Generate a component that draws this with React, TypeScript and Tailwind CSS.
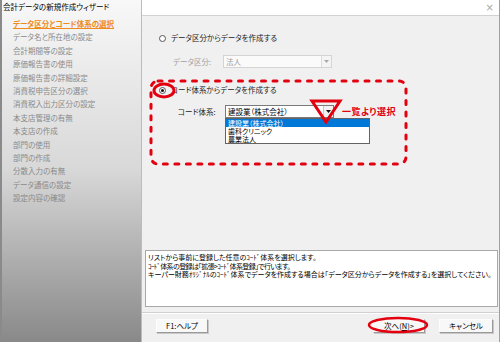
const FONT = "[font-family:'Noto_Sans_CJK_JP','Noto_Sans',sans-serif] [font-feature-settings:'palt']"

const steps = [
  'データ区分とコード体系の選択',
  'データ名と所在地の設定',
  '会計期間等の設定',
  '原価報告書の使用',
  '原価報告書の詳細設定',
  '消費税申告区分の選択',
  '消費税入出力区分の設定',
  '本支店管理の有無',
  '本支店の作成',
  '部門の使用',
  '部門の作成',
  '分散入力の有無',
  'データ通信の設定',
  '設定内容の確認',
]

function Radio({ checked }: { checked?: boolean }) {
  return (
    <span className="w-[7px] h-[7px] rounded-full border border-[#555] bg-white flex items-center justify-center shrink-0">
      {checked && <span className="w-[3px] h-[3px] rounded-full bg-[#111]" />}
    </span>
  )
}

function ComboArrow({ disabled }: { disabled?: boolean }) {
  return (
    <span
      className={`w-[10px] h-full flex items-center justify-center border-l ${
        disabled ? 'border-[#dcdcdc] bg-[#f4f4f4]' : 'border-[#c8c8c8] bg-[#f2f2f2]'
      }`}
    >
      <svg width="5" height="3" viewBox="0 0 5 3">
        <path d="M0 0 L5 0 L2.5 3 Z" fill={disabled ? '#a8a8a8' : '#111'} />
      </svg>
    </span>
  )
}

function Button({ children, className = '' }: { children: React.ReactNode; className?: string }) {
  return (
    <div
      className={`h-[14px] flex items-center justify-center text-[7.5px] text-black bg-[#f8f8f8] border border-t-[#fdfdfd] border-l-[#fdfdfd] border-r-[#9a9a9a] border-b-[#9a9a9a] shadow-[1px_1px_0_#c8c8c8] ${className}`}
    >
      {children}
    </div>
  )
}

export default function App() {
  return (
    <div className={`relative w-[500px] h-[342px] flex bg-[#8a8a8a] overflow-hidden ${FONT}`}>
      {/* left wizard step panel */}
      <div className="ml-[2px] w-[139px] h-[340px] bg-linear-to-b from-[#f8f8f8] via-[#d8d8d8] to-[#8a8a8a] rounded-b-[6px] flex flex-col">
        <div className="pl-[1px] pt-[2px] h-[16px] text-[7.5px] leading-[10px] text-black">会計データの新規作成ウィザード</div>
        <div className="pl-[11px] pt-[1px] flex flex-col">
          {steps.map((s, i) => (
            <div
              key={s}
              className={`h-[13.4px] text-[7.5px] leading-[13.4px] ${
                i === 0 ? 'text-[#ef8a1c] font-bold underline underline-offset-1' : 'text-[#8a8a8a]'
              }`}
            >
              {s}
            </div>
          ))}
        </div>
      </div>

      {/* right content */}
      <div className="flex-1 h-[342px] flex flex-col bg-[#f0f0f0] border-l border-[#bcbcbc] border-r border-r-[#a0a0a0]">
        <div className="h-[16px] bg-white border-b border-[#d2d2d2] flex items-center justify-end pr-[5px]">
          <span className="text-[10px] leading-none text-[#a8a8a8] [font-family:'DejaVu_Sans',sans-serif]">×</span>
        </div>

        <div className="flex-1 flex flex-col">
          <div className="mt-[17px] h-[10px] pl-[17px] flex items-center gap-[5px]">
            <Radio />
            <span className="text-[7.5px] text-[#222]">データ区分からデータを作成する</span>
          </div>

          <div className="mt-[12px] h-[13px] pl-[31px] flex items-center">
            <span className="w-[50px] text-[7.5px] text-[#a0a0a0]">データ区分:</span>
            <div className="w-[109px] h-[13px] flex items-center border border-[#d4d4d4] bg-[#fafafa]">
              <span className="flex-1 pl-[2px] text-[7.5px] text-[#a0a0a0]">法人</span>
              <ComboArrow disabled />
            </div>
          </div>

          <div className="mt-[17px] h-[10px] pl-[17px] flex items-center gap-[5px]">
            <Radio checked />
            <span className="text-[7.5px] text-[#222]">コード体系からデータを作成する</span>
          </div>

          <div className="mt-[10px] h-[13px] pl-[36px] flex items-center">
            <span className="w-[47px] text-[7.5px] text-[#222]">コード体系:</span>
            <div className="relative w-[109px] h-[13px] flex items-center border border-[#7a7a7a] bg-white">
              <span className="flex-1 pl-[2px] text-[7.5px] text-black">建設業（株式会社）</span>
              <ComboArrow />
              <div className="absolute left-[-1px] top-[12px] w-[145px] h-[26px] bg-white border border-[#646464] flex flex-col text-[7px] leading-[8px]">
                <div className="h-[8px] bg-[#0078d7] text-white pl-[2px]">建設業（株式会社）</div>
                <div className="h-[8px] pl-[2px] text-black">歯科クリニック</div>
                <div className="h-[8px] pl-[2px] text-black">農業法人</div>
              </div>
            </div>
          </div>

          <div className="flex-1" />

          <div className="ml-[3px] mr-[1px] h-[57px] bg-white border border-[#a8a8a8] px-[2px] pt-[2px] text-[7px] leading-[8.5px] text-black">
            <div>リストから事前に登録した任意のｺｰﾄﾞ体系を選択します。</div>
            <div className="tracking-[-0.6px]">ｺｰﾄﾞ体系の登録は｢拡張&gt;ｺｰﾄﾞ体系登録｣で行います。</div>
            <div>キーパー財務ｵﾘｼﾞﾅﾙのｺｰﾄﾞ体系でデータを作成する場合は｢データ区分からデータを作成する｣を選択してください。</div>
          </div>

          <div className="mt-[5px] border-t border-[#d0d0d0] border-b border-b-white" />

          <div className="mt-[5px] h-[14px] flex items-center pl-[14px] pr-[6px]">
            <Button className="w-[52px]">F1:ヘルプ</Button>
            <div className="flex-1" />
            <Button className="w-[52px]">
              次へ(<span className="underline">N</span>)&gt;
            </Button>
            <Button className="w-[54px] ml-[14px]">キャンセル</Button>
          </div>
          <div className="h-[9px]" />
        </div>
      </div>

      {/* red annotation marks */}
      <svg className="absolute inset-0 pointer-events-none" width="500" height="342" viewBox="0 0 500 342">
        <rect
          x="151"
          y="81"
          width="255"
          height="83"
          rx="7"
          fill="none"
          stroke="#e3000f"
          strokeWidth="3"
          strokeDasharray="4 7.5"
          strokeLinecap="round"
        />
        <ellipse cx="164" cy="90.5" rx="10" ry="6.5" fill="none" stroke="#e3000f" strokeWidth="3" />
        <polygon points="312,101 340,101 326,122" fill="none" stroke="#e3000f" strokeWidth="3" strokeLinejoin="miter" />
        <ellipse cx="398" cy="325" rx="29" ry="7" fill="none" stroke="#e3000f" strokeWidth="2.5" />
      </svg>
      <span className="absolute left-[342px] top-[105px] text-[9px] font-bold text-[#e3000f] tracking-[0.5px]">一覧より選択</span>
    </div>
  )
}
